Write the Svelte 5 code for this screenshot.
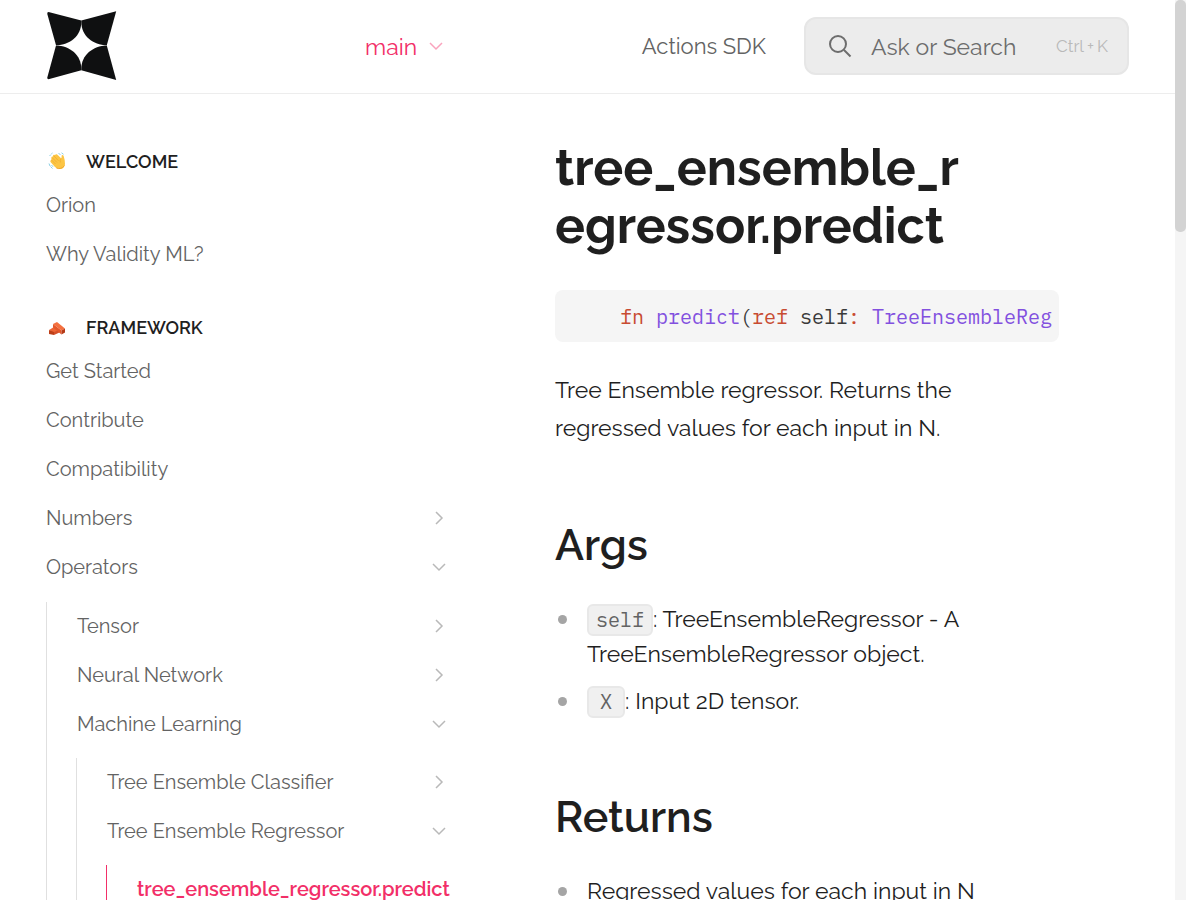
<script>
  const welcome = ['Orion', 'Why Validity ML?'];
  const framework = ['Get Started', 'Contribute', 'Compatibility'];
</script>

{#snippet chevron(open)}
  <svg class="chevron" viewBox="0 0 16 16" aria-hidden="true">
    {#if open}
      <path d="M2 5l6 6 6-6" />
    {:else}
      <path d="M5 2l6 6-6 6" />
    {/if}
  </svg>
{/snippet}

{#snippet branch(label, open)}
  <a class="row" href="#top"><span>{label}</span>{@render chevron(open)}</a>
{/snippet}

<div class="shell">
  <div class="page">
    <header>
      <a class="logo" href="#top" aria-label="Home">
        <svg viewBox="0 0 70 70" aria-hidden="true">
          <g fill="#0f1011">
            <path d="M1.500 1L34.300 9.500V11C34.300 25 23 34 9 34.300L0.300 3Q0 1 1.500 1z" />
            <path d="M69.200 0.300L34.300 9.500V11C34.300 25 46 34 59.800 34.300z" />
            <path d="M1.500 68.200L34.300 59.300V58C34.300 44 23 35 9 34.600L0.300 66.500Q0 68.200 1.500 68.200z" />
            <path d="M69.200 69L34.300 59.300V58C34.300 44 46 35 59.800 34.600z" />
          </g>
        </svg>
      </a>
      <button class="variant">main {@render chevron(true)}</button>
      <a class="sdk" href="#top">Actions SDK</a>
      <button class="search">
        <svg viewBox="0 0 24 24" aria-hidden="true">
          <circle cx="10" cy="10" r="8" />
          <path d="M16 16l6.500 6.500" />
        </svg>
        <span class="prompt">Ask or Search</span>
        <kbd>Ctrl<i>+</i>K</kbd>
      </button>
    </header>

    <div class="columns">
      <nav>
        <h4>
          <svg class="emoji" viewBox="0 0 18 18" aria-hidden="true">
            <path d="M3.500 5.500Q3.500 4 5 4.500L5 3.500Q5.500 2.200 7 3L8 2.300Q9 2 10 3.200L13.300 6.500Q13.800 5 13.600 3.500Q15 2.200 15.800 4.500Q17 8 17 12Q16.500 17 12 17Q8.500 17 6.500 14.500L2.500 10Q1.800 8.500 3.200 8z" fill="#fcc544" />
            <path d="M3.500 8l4 4M4 5.500l5 5M6 4l4.500 4.800M13.300 6.500Q11.500 8 12.300 10.500" fill="none" stroke="#eda72e" stroke-width="0.700" />
            <path d="M8.500 16Q13 18 16.500 13.500" fill="none" stroke="#efa02a" stroke-width="0.800" />
            <path d="M1.500 4l1.500-1.500M3.500 1.500l1-0.500M10.500 1.500l2 1M13.500 0.800l2 1.500M1 11.500l1 2.500M2.500 14.500l2 2M3.500 13l1.500 1.800" fill="none" stroke="#8dd0e4" stroke-width="1" />
          </svg>
          WELCOME
        </h4>
        <ul>
          {#each welcome as item}
            <li><a class="row" href="#top">{item}</a></li>
          {/each}
        </ul>
        <h4>
          <svg class="emoji" viewBox="0 0 18 18" aria-hidden="true">
            <path d="M1 12l5-3 6 3.500-6 2.500z" fill="#ee6636" />
            <path d="M1 12l5 2v3l-5-1z" fill="#bd3f18" />
            <path d="M6 14l5-2 1.500 2-6.500 3z" fill="#d4502a" />
            <path d="M5 6l4-2 8 6.500-3.500 2z" fill="#f4703f" />
            <path d="M5 6l8.500 6.500v4l-8.500-7z" fill="#e4572a" />
            <path d="M13.500 12.500l3.500-2v4l-3.500 2z" fill="#b53a17" />
          </svg>
          FRAMEWORK
        </h4>
        <ul>
          {#each framework as item}
            <li><a class="row" href="#top">{item}</a></li>
          {/each}
          <li>{@render branch('Numbers', false)}</li>
          <li>
            {@render branch('Operators', true)}
            <ul class="nested">
              <li>{@render branch('Tensor', false)}</li>
              <li>{@render branch('Neural Network', false)}</li>
              <li>
                {@render branch('Machine Learning', true)}
                <ul class="nested">
                  <li>{@render branch('Tree Ensemble Classifier', false)}</li>
                  <li>
                    {@render branch('Tree Ensemble Regressor', true)}
                    <ul class="nested current">
                      <li><a class="row" href="#top">tree_ensemble_regressor.predict</a></li>
                    </ul>
                  </li>
                </ul>
              </li>
            </ul>
          </li>
        </ul>
      </nav>

      <main>
        <h1>tree_ensemble_r<wbr />egressor.predict</h1>
        <pre><code><b>fn</b> <em>predict</em>(<b>ref</b> self<b>:</b> <em>TreeEnsembleReg</em></code></pre>
        <p>Tree Ensemble regressor. Returns the regressed values for each input in N.</p>
        <h2>Args</h2>
        <ul class="bullets">
          <li><code>self</code>: TreeEnsembleRegressor - A TreeEnsembleRegressor object.</li>
          <li><code class="short">X</code>: Input 2D tensor.</li>
        </ul>
        <h2>Returns</h2>
        <ul class="bullets">
          <li>Regressed values for each input in N</li>
        </ul>
      </main>
    </div>
  </div>
  <div class="track"><div class="thumb"></div></div>
</div>

<style>
  :global(body) {
    background: #fff;
  }
  .shell {
    display: grid;
    grid-template-columns: minmax(0, 1fr) 11px;
    height: 100vh;
    overflow: hidden;
    color: #1f1f1f;
    font-family: Raleway, Lato, sans-serif;
    font-size: 23px;
  }
  .shell * {
    box-sizing: border-box;
  }
  a {
    color: inherit;
    text-decoration: none;
  }
  button {
    font: inherit;
    border: 0;
    padding: 0;
    background: none;
    text-align: left;
    cursor: pointer;
  }
  ul {
    list-style: none;
    margin: 0;
    padding: 0;
  }
  .page {
    overflow: hidden;
  }
  .track {
    background: #f5f5f5;
  }
  .thumb {
    height: 232px;
    border-radius: 5px;
    background: #d3d3d3;
  }

  header {
    display: flex;
    align-items: center;
    height: 94px;
    padding: 0 46px 1px 47px;
    border-bottom: 1px solid #ededed;
    color: #636363;
  }
  .logo {
    width: 318px;
  }
  .logo svg {
    display: block;
    width: 70px;
    height: 70px;
  }
  .variant {
    display: flex;
    align-items: center;
    gap: 11px;
    color: #f22f68;
  }
  .sdk {
    margin-left: auto;
    margin-right: 38px;
    font-size: 22px;
  }
  .search {
    display: flex;
    align-items: center;
    width: 325px;
    height: 58px;
    padding: 0 19px 0 22px;
    border: 2px solid #e6e6e6;
    border-radius: 12px;
    background: #ececec;
    color: #6d6d6d;
  }
  .search svg {
    width: 24px;
    height: 24px;
    margin-right: 19px;
    fill: none;
    stroke: currentColor;
    stroke-width: 2;
  }
  kbd {
    display: flex;
    align-items: center;
    gap: 3px;
    margin-left: auto;
    color: #b9b9b9;
    font-family: inherit;
    font-size: 17px;
  }
  kbd i {
    font-size: 17px;
    font-style: normal;
  }
  .chevron {
    flex: none;
    width: 16px;
    height: 16px;
    fill: none;
    stroke: #b9b9b9;
    stroke-width: 1.500;
  }
  .variant .chevron {
    stroke: #f9a3bd;
  }

  .columns {
    display: grid;
    grid-template-columns: 408px minmax(0, 1fr);
    column-gap: 101px;
    padding: 0 116px 0 46px;
  }
  nav {
    padding-top: 47px;
    color: #636363;
    font-size: 20px;
  }
  h4 {
    display: flex;
    align-items: center;
    gap: 20px;
    height: 40px;
    margin: 0;
    color: #1f1f1f;
    font-size: 18px;
    font-weight: 600;
  }
  .emoji {
    width: 18px;
    height: 18px;
    margin-left: 2px;
  }
  nav > ul + h4 {
    margin-top: 30px;
  }
  .row {
    display: flex;
    align-items: center;
    justify-content: space-between;
    height: 47px;
    margin-bottom: 2px;
    padding-right: 7px;
  }
  .nested {
    margin-top: 12px;
    padding-left: 30px;
    border-left: 1px solid #e0e0e0;
  }
  .nested .nested {
    margin-top: 11px;
    margin-left: -1px;
  }
  .nested.current {
    border-color: #f22f68;
    color: #f22f68;
    font-weight: 600;
  }
  .current .row {
    padding-right: 0;
  }

  main {
    padding-top: 45px;
  }
  h1 {
    margin: 0 0 35px;
    font-size: 50px;
    font-weight: 700;
    line-height: 58px;
  }
  h2 {
    margin: 0;
    font-size: 43px;
    font-weight: 600;
    line-height: 58px;
  }
  pre {
    height: 52px;
    margin: 0;
    padding: 0 0 0 16px;
    overflow: hidden;
    border-radius: 8px;
    background: #f5f5f5;
    color: #3a3a3a;
    font-family: "IBM Plex Mono", "Liberation Mono", monospace;
    font-size: 20px;
    line-height: 54px;
  }
  pre code {
    padding-left: 49px;
    font: inherit;
  }
  pre b {
    color: #c84b31;
    font-weight: 400;
  }
  pre em {
    color: #8250df;
    font-style: normal;
  }
  p {
    margin: 29px 0 69px;
    line-height: 38px;
  }
  .bullets {
    margin: 27px 0 70px;
  }
  .bullets li {
    display: block;
    position: relative;
    margin-bottom: 12px;
    padding-left: 32px;
    line-height: 35px;
  }
  .bullets li::before {
    content: "";
    position: absolute;
    left: 3px;
    top: 14px;
    width: 9px;
    height: 9px;
    border-radius: 50%;
    background: #a5a5a5;
  }
  .bullets code {
    display: inline-block;
    padding: 0 7px;
    border: 2px solid #e8e8e8;
    border-radius: 6px;
    background: #f0f0f0;
    color: #636363;
    font-family: "IBM Plex Mono", "Liberation Mono", monospace;
    font-size: 20px;
    line-height: 28px;
  }
  .bullets .short {
    padding: 0 11px;
  }
</style>
